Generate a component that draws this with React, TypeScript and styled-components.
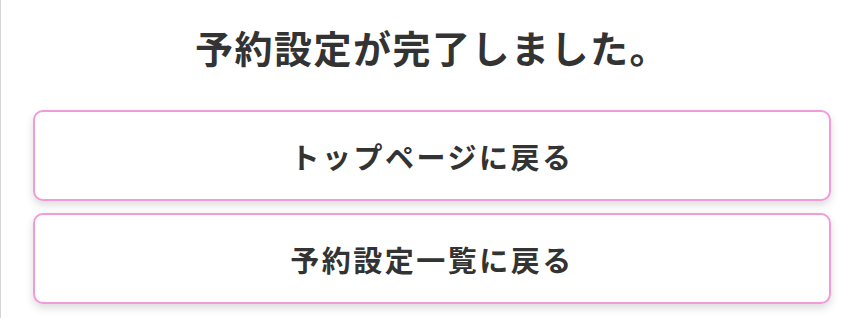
import styled, { createGlobalStyle } from "styled-components";

const GlobalStyle = createGlobalStyle`
    body {
        margin: 0;
        background: #fff;
        font-family: "Noto Sans CJK JP", "Noto Sans", sans-serif;
        color: #333;
    }
`;

const Page = styled.div`
    min-height: 318px;
    box-sizing: border-box;
    border-left: 1px solid #d6d6d6;
    padding: 24px 31px 0 32px;
`;

const Title = styled.h1`
    margin: 0 0 40px;
    text-align: center;
    font-size: 38px;
    font-weight: 700;
    line-height: 46px;
    letter-spacing: 1.5px;
    color: #333;
`;

const Actions = styled.div`
    display: flex;
    flex-direction: column;
    gap: 12px;
`;

const LinkButton = styled.button`
    height: 91px;
    width: 100%;
    box-sizing: border-box;
    border: 2px solid #f19bd8;
    border-radius: 10px;
    background: #fff;
    box-shadow: 0 4px 8px rgba(0, 0, 0, 0.14);
    font-family: inherit;
    font-size: 29px;
    font-weight: 700;
    letter-spacing: 2.5px;
    color: #333;
    cursor: pointer;
`;

export default function App() {
    return (
        <>
            <GlobalStyle />
            <Page>
                <Title>予約設定が完了しました。</Title>
                <Actions>
                    <LinkButton>トップページに戻る</LinkButton>
                    <LinkButton>予約設定一覧に戻る</LinkButton>
                </Actions>
            </Page>
        </>
    );
}
